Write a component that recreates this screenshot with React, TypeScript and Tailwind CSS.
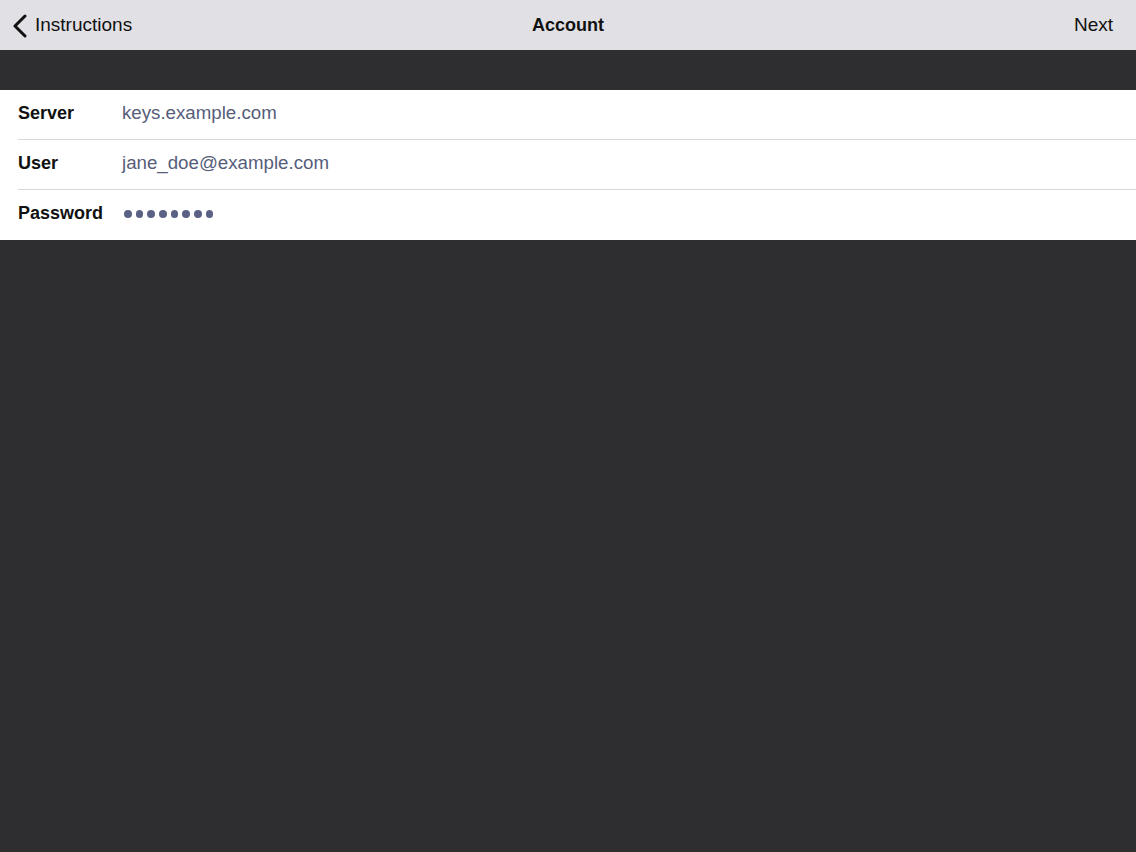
import React from 'react';

const rows = [
  { label: 'Server', value: 'keys.example.com' },
  { label: 'User', value: 'jane_doe@example.com' },
];

export default function App() {
  return (
    <div
      className="w-[1136px] h-[852px] bg-[#2e2d30] flex flex-col"
      style={{ fontFamily: '"Liberation Sans", Arial, sans-serif' }}
    >
      <header className="h-[50px] bg-[#e1e0e4] flex items-center justify-between relative pt-[1px]">
        <div className="flex items-center pl-[12px] text-[19px] text-[#111]">
          <svg width="16" height="24" viewBox="0 0 16 24" className="mr-[7px]">
            <path d="M13 2 L3 12 L13 22" fill="none" stroke="#111" strokeWidth="3" strokeLinecap="round" strokeLinejoin="round" />
          </svg>
          Instructions
        </div>
        <div className="absolute left-0 right-0 text-center text-[18px] font-bold text-[#111] pointer-events-none">
          Account
        </div>
        <div className="pr-[23px] text-[19px] text-[#111]">Next</div>
      </header>
      <div className="h-[40px]" />
      <div className="bg-white">
        {rows.map((r) => (
          <div key={r.label} className="h-[50px] flex items-center pl-[18px] pb-[4px] relative">
            <span className="w-[104px] text-[18px] font-bold text-[#111]">{r.label}</span>
            <span className="text-[18.7px] text-[#565d7a]">{r.value}</span>
            <div className="absolute left-[18px] right-0 bottom-0 h-px bg-[#d8d8dc]" />
          </div>
        ))}
        <div className="h-[50px] flex items-center pl-[18px] pb-[4px]">
          <span className="w-[104px] text-[18px] font-bold text-[#111]">Password</span>
          <div className="flex gap-[4.2px] ml-[2px] mt-[2px]">
            {Array.from({ length: 8 }).map((_, i) => (
              <span key={i} className="w-[7.5px] h-[7.5px] rounded-full bg-[#5b6185]" />
            ))}
          </div>
        </div>
      </div>
    </div>
  );
}
